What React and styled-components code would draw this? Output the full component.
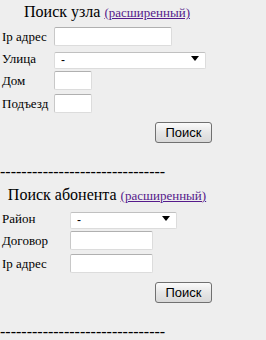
import styled, { createGlobalStyle } from 'styled-components'

const GlobalStyle = createGlobalStyle`
  body {
    margin: 0;
    background: #eeeeee;
    font-family: "Liberation Serif", "Times New Roman", serif;
    color: #000;
  }
`

function SearchForm({ title, labelWidth, fields }) {
  return (
    <Form>
      <Title>
        {title} <MoreLink href="#">(расширенный)</MoreLink>
      </Title>
      <Fields labelWidth={labelWidth}>
        {fields.map((f) => (
          <Row key={f.label}>
            <Label>{f.label}</Label>
            {f.select ? (
              <SelectBox width={f.width}>
                <Select defaultValue="-">
                  <option>-</option>
                </Select>
              </SelectBox>
            ) : (
              <TextInput width={f.width} />
            )}
          </Row>
        ))}
      </Fields>
      <Actions>
        <Button>Поиск</Button>
      </Actions>
    </Form>
  )
}

function App() {
  return (
    <Page>
      <GlobalStyle />
      <SearchForm
        title="Поиск узла"
        labelWidth={52}
        fields={[
          { label: 'Ip адрес', width: 118 },
          { label: 'Улица', width: 152, select: true },
          { label: 'Дом', width: 38 },
          { label: 'Подъезд', width: 38 },
        ]}
      />
      <Divider>{'-'.repeat(31)}</Divider>
      <SearchForm
        title="Поиск абонента"
        labelWidth={68}
        fields={[
          { label: 'Район', width: 107, select: true },
          { label: 'Договор', width: 83 },
          { label: 'Ip адрес', width: 83 },
        ]}
      />
      <Divider>{'-'.repeat(31)}</Divider>
    </Page>
  )
}

const Page = styled.div`
  width: 214px;
  padding-top: 3px;
`

const Form = styled.form`
  display: flex;
  flex-direction: column;
  margin: 0;
`

const Title = styled.div`
  text-align: center;
  font-size: 16px;
  line-height: 18px;
  margin-bottom: 5px;
`

const MoreLink = styled.a`
  font-size: 13px;
  color: #551a8b;
  text-decoration: underline;
`

const Fields = styled.div`
  display: grid;
  grid-template-columns: ${(p) => p.labelWidth}px auto;
  row-gap: 4px;
  padding-left: 2px;
`

const Row = styled.div`
  display: contents;
`

const Label = styled.span`
  font-size: 13px;
  align-self: center;
  white-space: nowrap;
`

const TextInput = styled.input`
  box-sizing: border-box;
  width: ${(p) => p.width}px;
  height: 19px;
  margin: 0;
  padding: 0 3px;
  background: #fff;
  border: 1px solid #dcdcdc;
  border-top-color: #b0b0b0;
  border-left-color: #c8c8c8;
  border-radius: 2px;
  font-family: "Liberation Sans", Arial, sans-serif;
  font-size: 12px;
`

const SelectBox = styled.div`
  position: relative;
  width: ${(p) => p.width}px;
  height: 17px;

  &::after {
    content: '';
    position: absolute;
    right: 7px;
    top: 6px;
    border-left: 4.5px solid transparent;
    border-right: 4.5px solid transparent;
    border-top: 5px solid #000;
    pointer-events: none;
  }
`

const Select = styled.select`
  appearance: none;
  box-sizing: border-box;
  width: 100%;
  height: 100%;
  margin: 0;
  padding: 0 6px;
  background: #fff;
  border: 1px solid #dcdcdc;
  border-top-color: #c0c0c0;
  border-radius: 2px;
  font-family: "Liberation Sans", Arial, sans-serif;
  font-size: 12px;
  color: #000;
`

const Actions = styled.div`
  display: flex;
  justify-content: flex-end;
  padding: 9px 2px 0 0;
`

const Button = styled.button`
  box-sizing: border-box;
  width: 57px;
  height: 21px;
  padding: 0;
  border: 1px solid #707070;
  border-radius: 3px;
  background: linear-gradient(#fbfbfb, #e6e6e6 50%, #d8d8d8);
  font-family: "Liberation Sans", Arial, sans-serif;
  font-size: 13px;
  color: #000;
`

const Divider = styled.div`
  font-size: 16px;
  line-height: 18px;
  margin-top: 20px;
  margin-bottom: 5px;
  white-space: nowrap;
`

export default App
